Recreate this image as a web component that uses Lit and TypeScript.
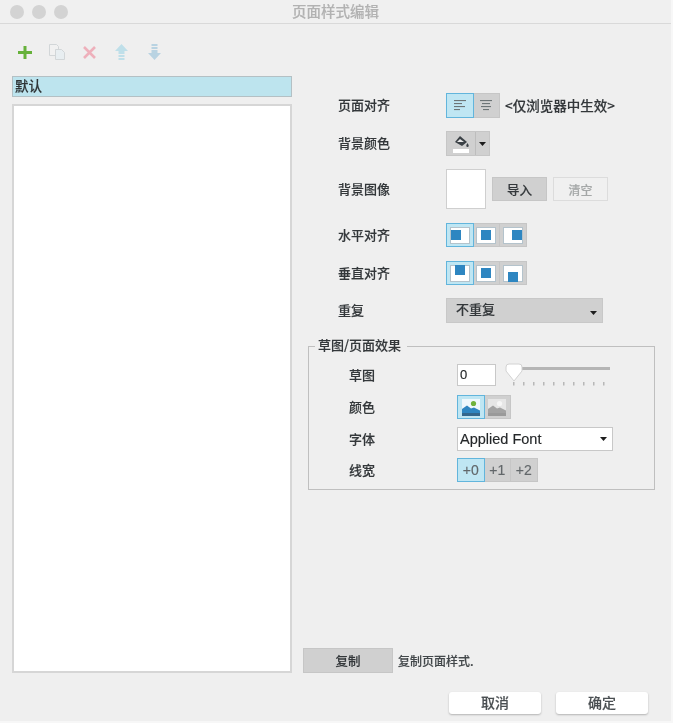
import { LitElement, html, css, svg } from "lit";
import { customElement } from "lit/decorators.js";

const alignIcon = (kind: "l" | "c") => {
  const lines = kind === "l"
    ? [[0, 12], [0, 8], [0, 11], [0, 6]]
    : [[0, 12], [2, 8], [1, 10], [3, 6]];
  return html`<svg width="12" height="11" viewBox="0 0 12 11">
    ${lines.map(([x, w], i) => svg`<rect x=${x} y=${i * 3} width=${w} height="1.1" fill="#6d7577"/>`)}
  </svg>`;
};

const boxIcon = (x: number, y: number) => html`<svg width="20" height="17" viewBox="0 0 20 17">
  <rect x="0.5" y="0.5" width="19" height="16" fill="#fff" stroke="#b4c3cc"/>
  <rect x=${x} y=${y} width="10" height="10" fill="#2e86c1"/>
</svg>`;

const caret = html`<svg class="caret" width="7" height="4" viewBox="0 0 7 4"><path d="M0 0h7L3.5 4z" fill="#1d1d1d"/></svg>`;

const landscape = (color: boolean) => html`<svg width="18" height="17" viewBox="0 0 18 17">
  <rect width="18" height="17" fill=${color ? "#eef8fc" : "#e6e6e6"}/>
  <circle cx="11.5" cy="4.5" r="2.6" fill=${color ? "#6fb23c" : "#f6f6f6"}/>
  <path d="M0 10 5 6.5l4 3 3-1 6 3V17H0z" fill=${color ? "#2e86c1" : "#a3a3a3"}/>
  <rect y="14" width="18" height="3" fill=${color ? "#33678c" : "#9a9a9a"}/>
</svg>`;

@customElement("app-root")
export class AppRoot extends LitElement {
  static styles = css`
    :host {
      display: block;
      width: 673px;
      height: 723px;
      overflow: hidden;
      background: #f7f7f7;
      color: #33373a;
      font: 500 13px "Noto Sans CJK SC", "Liberation Sans", sans-serif;
      -webkit-text-stroke: 0.15px currentColor;
    }
    .window {
      width: 671px;
      height: 721px;
      background: #efefef;
      display: flex;
      flex-direction: column;
      filter: blur(0.6px);
    }
    .titlebar {
      position: relative;
      height: 23px;
      flex: none;
      display: flex;
      align-items: center;
      justify-content: center;
      border-bottom: 1px solid #d9d9d9;
      background: #f0f0f0;
      color: #b2b2b2;
      font-size: 14.5px;
      box-sizing: content-box;
      padding-bottom: 0;
    }
    .title { padding-bottom: 2px; }
    .lights { position: absolute; left: 10px; top: 5px; display: flex; gap: 8px; }
    .lights i { width: 14px; height: 14px; border-radius: 50%; background: #d3d3d3; display: block; }
    .body { flex: 1; display: grid; grid-template-columns: 303px 1fr; min-height: 0; }
    .left { padding: 18px 0 0 12px; display: flex; flex-direction: column; width: 280px; }
    .tools { height: 20px; margin-bottom: 14px; display: flex; align-items: center; padding-left: 6px; }
    .tools svg { display: block; flex: none; }
    .t-copy { margin-left: 16px; }
    .t-del { margin-left: 16px; }
    .t-up { margin-left: 19px; }
    .t-down { margin-left: 20px; }
    .head {
      height: 21px;
      box-sizing: border-box;
      background: #bde4ee;
      border: 1px solid #b4c0c4;
      padding-left: 2px;
      line-height: 16px;
      font-size: 13.5px;
      color: #2f3436;
    }
    .list {
      margin-top: 7px;
      height: 569px;
      box-sizing: border-box;
      background: #fff;
      border: 2px solid #d6d6d6;
    }
    .right { padding-top: 69px; display: flex; flex-direction: column; }
    .row { display: flex; align-items: center; margin-left: 35px; }
    .label { width: 108px; flex: none; font-size: 13px; padding-bottom: 2px; }
    .r1 { height: 25px; margin-bottom: 13px; }
    .r2 { height: 25px; margin-bottom: 13px; }
    .r3 { height: 40px; margin-bottom: 14px; }
    .r4 { height: 24px; margin-bottom: 14px; }
    .r5 { height: 24px; margin-bottom: 13px; }
    .r6 { height: 25px; margin-bottom: 15px; }
    .note { margin-left: 5px; font-size: 13.5px; white-space: nowrap; padding-bottom: 2px; }
    .seg { display: flex; }
    .btn {
      width: 27.5px;
      height: 100%;
      box-sizing: border-box;
      display: flex;
      align-items: center;
      justify-content: center;
      background: #d0d0d0;
      border: 1px solid #c6c6c6;
      margin-left: -1px;
    }
    .btn:first-child { margin-left: 0; }
    .btn.on { background: #bfe6f3; border-color: #62b5dc; position: relative; z-index: 1; }
    .seg.h25 { height: 25px; }
    .seg.h24 { height: 24px; }
    .color {
      display: flex;
      height: 25px;
      width: 44px;
      box-sizing: border-box;
      background: #d0d0d0;
      border: 1px solid #c6c6c6;
    }
    .color .bucket { width: 28px; display: flex; align-items: center; justify-content: center; border-right: 1px solid #bdbdbd; }
    .color .arrow { flex: 1; display: flex; align-items: center; justify-content: center; }
    .swatch { width: 40px; height: 40px; box-sizing: border-box; background: #fff; border: 1px solid #cfcfcf; }
    .plain {
      width: 55px;
      height: 24px;
      margin-left: 6px;
      box-sizing: border-box;
      display: flex;
      align-items: center;
      justify-content: center;
      font-size: 12.5px;
      background: #d0d0d0;
      border: 1px solid #c6c6c6;
    }
    .plain.off { background: #f0f0f0; border-color: #dcdcdc; color: #a5a8a8; font-size: 12px; }
    .select {
      box-sizing: border-box;
      display: flex;
      align-items: center;
      justify-content: space-between;
      border: 1px solid #c8c8c8;
    }
    .select.gray { width: 157px; height: 25px; background: #d0d0d0; padding: 0 5px 0 9px; align-items: flex-start; line-height: 19px; }
    .select.gray .caret { align-self: flex-end; margin-bottom: 7px; }
    .select.white {
      width: 156px;
      height: 24px;
      background: #fff;
      padding: 0 5px 0 2px;
      font: 500 14.5px "Liberation Sans", sans-serif;
      color: #25282a;
    }
    fieldset {
      margin: 0 0 0 5px;
      width: 347px;
      height: 152px;
      box-sizing: border-box;
      border: 1px solid #bfbfbf;
      padding: 0 0 0 40px;
      min-inline-size: 0;
    }
    legend { margin-left: -34px; padding: 0 6px 0 3px; height: 16px; line-height: 14px; font-size: 13px; }
    .f-row { display: flex; align-items: center; }
    .f-label { width: 108px; flex: none; font-size: 13px; padding-bottom: 2px; }
    .f1 { height: 22px; margin-top: 10px; margin-bottom: 9px; }
    .f2 { height: 24px; margin-bottom: 8px; }
    .f3 { height: 24px; margin-bottom: 7px; }
    .f4 { height: 24px; }
    .input {
      width: 39px;
      height: 22px;
      box-sizing: border-box;
      background: #fff;
      border: 1px solid #c8c8c8;
      font: 500 13px "Liberation Sans", sans-serif;
      line-height: 20px;
      padding-left: 2px;
      color: #25282a;
    }
    .slider { margin-left: 9px; display: block; flex: none; }
    .num { font: 500 14px "Liberation Sans", sans-serif; color: #62676a; }
    .grow { flex: 1; }
    .copy { display: flex; align-items: center; height: 25px; margin-bottom: 19px; }
    .copy .plain { width: 90px; height: 25px; margin-left: 0; font-size: 12.5px; }
    .copy span { margin-left: 5px; font-size: 12px; color: #43484b; }
    .footer { display: flex; gap: 15px; margin-left: 146px; height: 22px; margin-bottom: 7px; }
    .footer div {
      width: 92px;
      height: 22px;
      box-sizing: border-box;
      padding-bottom: 2px;
      display: flex;
      align-items: center;
      justify-content: center;
      background: #fff;
      border-radius: 3px;
      box-shadow: 0 1px 2px rgba(0, 0, 0, 0.25);
      font-size: 14px;
      line-height: 20px;
      color: #4a4f52;
    }
  `;

  render() {
    return html`<div class="window">
      <div class="titlebar">
        <div class="lights"><i></i><i></i><i></i></div>
        <div class="title">页面样式编辑</div>
      </div>
      <div class="body">
        <div class="left">
          <div class="tools">
            <svg width="14" height="13" viewBox="0 0 14 13"><path d="M5.5 0h3v5h5.5v3H8.5v5h-3V8H0V5h5.5z" fill="#66b13a"/></svg>
            <svg class="t-copy" width="19" height="18" viewBox="0 0 19 18" fill="#f1f1f1" stroke="#d2d6d8">
              <path d="M1.5 1.5h7l2 2v9h-9z"/><path d="M7.5 6.5h6l3 3v7h-9z" fill="#e8eef1"/>
            </svg>
            <svg class="t-del" width="13" height="13" viewBox="0 0 13 13"><path d="M1 1l11 11M12 1 1 12" stroke="#eeb0bb" stroke-width="2.6" fill="none"/></svg>
            <svg class="t-up" width="13" height="16" viewBox="0 0 13 16"><path d="M6.5 0 13 7H9.5v3h-6V7H0zM3.5 11h6v2h-6zM3.5 14h6v2h-6z" fill="#bfdfe9"/></svg>
            <svg class="t-down" width="13" height="16" viewBox="0 0 13 16"><path d="M6.5 16 0 9h3.5V6h6v3H13zM3.5 5h6V3h-6zM3.5 2h6V0h-6z" fill="#b9d3e2"/></svg>
          </div>
          <div class="head">默认</div>
          <div class="list"></div>
        </div>
        <div class="right">
          <div class="row r1">
            <div class="label">页面对齐</div>
            <div class="seg h25">
              <div class="btn on">${alignIcon("l")}</div>
              <div class="btn">${alignIcon("c")}</div>
            </div>
            <div class="note">&lt;仅浏览器中生效&gt;</div>
          </div>
          <div class="row r2">
            <div class="label">背景颜色</div>
            <div class="color">
              <div class="bucket">
                <svg width="18" height="19" viewBox="0 0 18 19">
                  <path d="M8 2 15 8l-5 4L3 8z" fill="#3b4146"/>
                  <path d="M8 5l-3 3h7z" fill="#e8e8e8"/>
                  <path d="M15.5 9c.8 1.4 1.2 2 1.2 2.7a1.2 1.2 0 0 1-2.4 0c0-.7.4-1.3 1.2-2.7z" fill="#3b4146"/>
                  <rect x="1" y="15" width="16" height="4" fill="#fff"/>
                </svg>
              </div>
              <div class="arrow">${caret}</div>
            </div>
          </div>
          <div class="row r3">
            <div class="label">背景图像</div>
            <div class="swatch"></div>
            <div class="plain">导入</div>
            <div class="plain off">清空</div>
          </div>
          <div class="row r4">
            <div class="label">水平对齐</div>
            <div class="seg h24">
              <div class="btn on">${boxIcon(1, 3)}</div>
              <div class="btn">${boxIcon(5, 3)}</div>
              <div class="btn">${boxIcon(9, 3)}</div>
            </div>
          </div>
          <div class="row r5">
            <div class="label">垂直对齐</div>
            <div class="seg h24">
              <div class="btn on">${boxIcon(5, 0)}</div>
              <div class="btn">${boxIcon(5, 3)}</div>
              <div class="btn">${boxIcon(5, 7)}</div>
            </div>
          </div>
          <div class="row r6">
            <div class="label">重复</div>
            <div class="select gray"><span>不重复</span>${caret}</div>
          </div>
          <fieldset>
            <legend>草图/页面效果</legend>
            <div class="f-row f1">
              <div class="f-label">草图</div>
              <div class="input">0</div>
              <svg class="slider" width="106" height="24" viewBox="0 0 106 24">
                <rect x="16" y="4" width="89" height="3" fill="#b5b5b5"/>
                ${[8, 18, 28, 38, 48, 58, 68, 78, 88, 98].map((x) => svg`<rect x=${x} y="19" width="1.5" height="3.5" fill="#b8b8b8"/>`)}
                <path d="M4 1h10a3 3 0 0 1 3 3v4l-8 10L1 8V4a3 3 0 0 1 3-3z" fill="#fff" stroke="#d2d2d2"/>
              </svg>
            </div>
            <div class="f-row f2">
              <div class="f-label">颜色</div>
              <div class="seg h24">
                <div class="btn on">${landscape(true)}</div>
                <div class="btn">${landscape(false)}</div>
              </div>
            </div>
            <div class="f-row f3">
              <div class="f-label">字体</div>
              <div class="select white"><span>Applied Font</span>${caret}</div>
            </div>
            <div class="f-row f4">
              <div class="f-label">线宽</div>
              <div class="seg h24">
                <div class="btn on num">+0</div>
                <div class="btn num">+1</div>
                <div class="btn num">+2</div>
              </div>
            </div>
          </fieldset>
          <div class="grow"></div>
          <div class="copy">
            <div class="plain">复制</div>
            <span>复制页面样式.</span>
          </div>
          <div class="footer"><div>取消</div><div>确定</div></div>
        </div>
      </div>
    </div>`;
  }
}
